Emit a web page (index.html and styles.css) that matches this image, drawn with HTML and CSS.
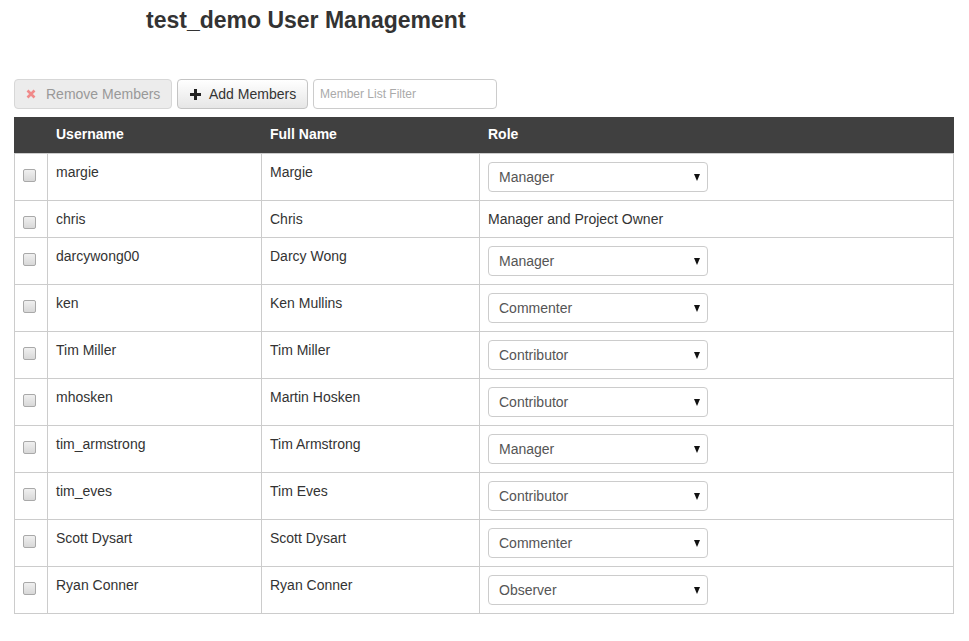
FILE: index.html
```html
<!DOCTYPE html>
<html>
<head>
<meta charset="utf-8">
<title>test_demo User Management</title>
<link rel="stylesheet" href="styles.css">
</head>
<body>
<div class="page">
  <h1 class="title">test_demo User Management</h1>
  <div class="toolbar">
    <button class="btn btn-disabled" disabled>
      <svg class="icon" viewBox="0 0 10 10" width="10" height="10"><path d="M1.5 1.5 L8.5 8.5 M8.5 1.5 L1.5 8.5" stroke="#f08a8a" stroke-width="2.6" stroke-linecap="butt"/></svg>
      Remove Members
    </button>
    <button class="btn btn-default">
      <svg class="icon" viewBox="0 0 11 11" width="11" height="11"><path d="M5.5 0 V11 M0 5.5 H11" stroke="#222" stroke-width="3"/></svg>
      Add Members
    </button>
    <input class="filter" type="text" placeholder="Member List Filter">
  </div>
  <table class="members">
    <colgroup>
      <col class="c-check">
      <col class="c-user">
      <col class="c-name">
      <col class="c-role">
    </colgroup>
    <thead>
      <tr><th></th><th>Username</th><th>Full Name</th><th>Role</th></tr>
    </thead>
    <tbody>
      <tr><td class="chk"><input type="checkbox"></td><td>margie</td><td>Margie</td><td><div class="sel"><select><option>Manager</option></select></div></td></tr>
      <tr><td class="chk"><input type="checkbox"></td><td>chris</td><td>Chris</td><td>Manager and Project Owner</td></tr>
      <tr><td class="chk"><input type="checkbox"></td><td>darcywong00</td><td>Darcy Wong</td><td><div class="sel"><select><option>Manager</option></select></div></td></tr>
      <tr><td class="chk"><input type="checkbox"></td><td>ken</td><td>Ken Mullins</td><td><div class="sel"><select><option>Commenter</option></select></div></td></tr>
      <tr><td class="chk"><input type="checkbox"></td><td>Tim Miller</td><td>Tim Miller</td><td><div class="sel"><select><option>Contributor</option></select></div></td></tr>
      <tr><td class="chk"><input type="checkbox"></td><td>mhosken</td><td>Martin Hosken</td><td><div class="sel"><select><option>Contributor</option></select></div></td></tr>
      <tr><td class="chk"><input type="checkbox"></td><td>tim_armstrong</td><td>Tim Armstrong</td><td><div class="sel"><select><option>Manager</option></select></div></td></tr>
      <tr><td class="chk"><input type="checkbox"></td><td>tim_eves</td><td>Tim Eves</td><td><div class="sel"><select><option>Contributor</option></select></div></td></tr>
      <tr><td class="chk"><input type="checkbox"></td><td>Scott Dysart</td><td>Scott Dysart</td><td><div class="sel"><select><option>Commenter</option></select></div></td></tr>
      <tr><td class="chk"><input type="checkbox"></td><td>Ryan Conner</td><td>Ryan Conner</td><td><div class="sel"><select><option>Observer</option></select></div></td></tr>
    </tbody>
  </table>
</div>
</body>
</html>
```

FILE: styles.css
```css
html, body {
  margin: 0;
  padding: 0;
  background: #fff;
}
body {
  font-family: "Liberation Sans", Arial, sans-serif;
  font-size: 14px;
  line-height: 20px;
  color: #333;
}
.page {
  padding: 0 16px 0 14px;
}
.title {
  margin: 0;
  padding: 5px 0 0 132px;
  font-size: 23px;
  line-height: 30px;
  font-weight: bold;
  color: #333;
  height: 74px;
  box-sizing: border-box;
}
.toolbar {
  display: flex;
  align-items: center;
  gap: 5px;
  margin-top: 5px;
  height: 30px;
}
.btn {
  display: inline-flex;
  align-items: center;
  height: 30px;
  box-sizing: border-box;
  font-family: inherit;
  font-size: 14px;
  line-height: 20px;
  border: 1px solid #ccc;
  border-radius: 4px;
  cursor: pointer;
  white-space: nowrap;
}
.btn-disabled {
  width: 158px;
  gap: 10px;
  padding: 0 0 0 11px;
  background: #ececec;
  color: #999;
  border-color: #d7d7d7;
  cursor: default;
}
.btn-default {
  width: 131px;
  gap: 8px;
  padding: 0 0 0 12px;
  background: linear-gradient(to bottom, #fff 0%, #e6e6e6 100%);
  color: #333;
  border-color: #c4c4c4;
}
.icon {
  display: block;
  flex: none;
}
.filter {
  width: 184px;
  height: 30px;
  box-sizing: border-box;
  border: 1px solid #ccc;
  border-radius: 4px;
  padding: 0 6px;
  font-family: inherit;
  font-size: 12px;
  color: #555;
}
.filter::placeholder {
  color: #aaa;
}
.members {
  margin-top: 8px;
  width: 939px;
  border-collapse: collapse;
  table-layout: fixed;
  border: 1px solid #ccc;
}
.c-check { width: 33px; }
.c-user { width: 214px; }
.c-name { width: 218px; }
.c-role { width: 474px; }
.members th {
  background: #404040;
  color: #fff;
  font-weight: bold;
  text-align: left;
  padding: 6px 8px 9px;
  border: 1px solid #404040;
  border-left-color: #ccc;
  border-bottom-color: #ccc;
  line-height: 20px;
}
.members th:first-child {
  border-left-color: #404040;
}
.members td {
  padding: 8px;
  border: 1px solid #ccc;
  vertical-align: top;
  line-height: 20px;
}
.chk input {
  appearance: none;
  -webkit-appearance: none;
  display: block;
  width: 13px;
  height: 13px;
  margin: 7px 0 0 0;
  box-sizing: border-box;
  border: 1px solid #a9a9a9;
  border-radius: 2px;
  background: linear-gradient(to bottom, #f0f0f0, #d8d8d8);
}
.sel {
  position: relative;
  width: 220px;
}
.sel select {
  appearance: none;
  -webkit-appearance: none;
  display: block;
  width: 220px;
  height: 30px;
  box-sizing: border-box;
  padding: 0 10px;
  border: 1px solid #ccc;
  border-radius: 4px;
  background: #fff;
  font-family: inherit;
  font-size: 14px;
  color: #555;
}
.sel::after {
  content: "";
  position: absolute;
  right: 8px;
  top: 12px;
  border-left: 3.5px solid transparent;
  border-right: 3.5px solid transparent;
  border-top: 7px solid #111;
  pointer-events: none;
}
```
